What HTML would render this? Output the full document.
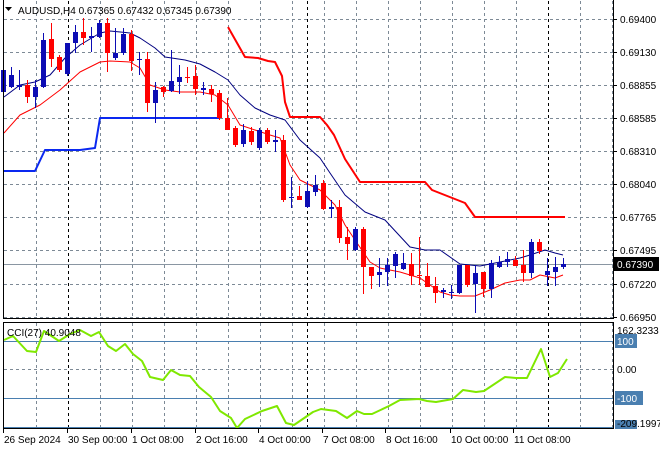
<!DOCTYPE html>
<html><head><meta charset="utf-8"><style>
html,body{margin:0;padding:0;background:#fff;}
svg{display:block;font-family:"Liberation Sans",sans-serif;}
</style></head><body>
<svg id="s" width="660" height="450" xmlns="http://www.w3.org/2000/svg">
<rect width="660" height="450" fill="#fff"/>
<g id="grid"></g>
<g id="lines"></g>
<g id="candles"></g>
<g id="over"></g>
<g id="axis" font-size="10" fill="#000"></g>
</svg>
<script>
const NS="http://www.w3.org/2000/svg";
function el(p,t,a,txt){const e=document.createElementNS(NS,t);for(const k in a)e.setAttribute(k,a[k]);if(txt!==undefined)e.textContent=txt;document.getElementById(p).appendChild(e);return e;}
const gray="#7d8a96";
[19,52,85,118,151,184,217,250,284,317].forEach(y=>el("grid","line",{x1:4,x2:613,y1:y+.5,y2:y+.5,stroke:gray,"stroke-dasharray":"3,3"}));
for(let x=36;x<613;x+=32){const blk=(x==68||x==548);el("grid","line",{x1:x+.5,x2:x+.5,y1:1,y2:318,stroke:blk?"#000":gray,"stroke-dasharray":"3,3"});el("grid","line",{x1:x+.5,x2:x+.5,y1:323,y2:428,stroke:blk?"#000":gray,"stroke-dasharray":"3,3"});}
el("grid","line",{x1:307.5,x2:307.5,y1:1,y2:318,stroke:"#000","stroke-dasharray":"3,3"});
el("grid","line",{x1:307.5,x2:307.5,y1:323,y2:428,stroke:"#000","stroke-dasharray":"3,3"});
el("grid","line",{x1:4,x2:613,y1:369.5,y2:369.5,stroke:gray,"stroke-dasharray":"3,3"});
[341,398,427].forEach(y=>el("grid","line",{x1:4,x2:613,y1:y+.5,y2:y+.5,stroke:"#4a7fb0"}));
el("grid","line",{x1:4,x2:613,y1:264.5,y2:264.5,stroke:"#8a96a2"});
function pl(pts,st,w){el("lines","polyline",{points:pts.map(p=>p.join(",")).join(" "),fill:"none",stroke:st,"stroke-width":w,"stroke-linejoin":"round"});}
pl([[4,97],[20,85],[35,82],[50,75],[65,58],[80,45],[100,33],[110,31],[130,33],[140,38],[155,48],[165,57],[185,60],[200,64],[215,72],[228,80],[240,95],[255,108],[270,115],[285,120],[300,140],[320,158],[330,173],[345,195],[365,212],[385,220],[410,247],[425,250],[440,250],[460,264],[480,266],[500,262],[520,258],[530,255],[545,250],[555,253],[563,255]],"#000080",1);
pl([[4,133],[20,115],[40,105],[60,90],[80,72],[100,62],[110,61],[130,62],[140,68],[150,85],[165,90],[180,92],[200,92],[215,95],[228,105],[240,125],[255,130],[270,135],[280,138],[290,165],[300,180],[320,190],[335,205],[345,225],[355,240],[370,262],[380,268],[400,272],[420,278],[440,292],[450,295],[460,296],[475,296],[490,290],[505,283],[520,280],[530,280],[540,275],[550,277],[555,278],[563,275]],"#ff0000",1);
pl([[4,171],[35,171],[45,150],[80,150],[95,148],[100,118],[220,118]],"#0a28f0",2);
pl([[228,27],[245,57],[258,58],[268,61],[275,62],[282,76],[285,102],[290,117],[320,117],[327,125],[334,135],[345,159],[360,182],[425,182],[432,190],[465,203],[475,217],[565,217]],"#ff0000",2);
const C=[[3,"b",70,92,63,113],[11,"b",75,87,67,88],[19,"b",85,87,70,90],[27,"r",85,97,80,103],[35,"b",87,97,80,108],[43,"b",40,87,33,88],[51,"r",39,59,23,67],[59,"r",57,70,55,72],[67,"b",43,74,43,76],[75,"b",32,43,25,53],[83,"r",32,38,18,45],[91,"b",36,38,27,52],[99,"b",23,37,20,38],[107,"r",23,53,18,72],[115,"b",53,58,28,60],[123,"b",34,53,28,55],[131,"r",34,61,30,71],[139,"b",59,60,52,75],[147,"r",59,103,52,112],[155,"b",90,103,82,123],[163,"r",87,92,86,97],[171,"b",81,91,50,92],[179,"b",77,82,65,94],[187,"r",77,78,67,83],[195,"r",76,89,65,95],[203,"b",88,90,82,95],[211,"r",89,94,85,102],[219,"r",93,118,90,120],[227,"r",118,130,98,130],[235,"r",128,145,126,147],[243,"b",130,144,124,147],[251,"r",131,142,127,145],[259,"b",130,148,128,150],[267,"r",130,142,128,144],[275,"b",140,142,130,152],[283,"r",140,200,135,202],[291,"b",197,198,177,208],[299,"r",196,200,186,200],[307,"b",191,207,181,208],[315,"b",185,192,175,196],[323,"r",183,209,180,210],[331,"b",207,209,200,218],[339,"r",207,238,200,243],[347,"r",237,244,227,260],[355,"b",229,250,227,251],[363,"r",229,267,227,294],[371,"r",267,276,267,289],[379,"b",272,275,258,287],[387,"b",265,272,258,286],[395,"b",254,266,252,278],[403,"b",263,269,253,270],[411,"r",264,276,253,285],[419,"r",275,276,237,285],[427,"r",276,287,263,287],[435,"r",286,293,277,303],[443,"b",290,292,288,298],[451,"b",292,293,285,299],[459,"b",265,293,265,294],[467,"r",265,285,265,287],[475,"b",273,284,265,313],[483,"r",272,289,272,297],[491,"b",263,289,260,298],[499,"b",262,267,256,268],[507,"b",259,262,252,267],[515,"r",260,266,256,265],[523,"r",265,273,250,282],[531,"b",242,273,239,278],[539,"r",242,251,239,254],[547,"b",271,275,258,286],[555,"b",267,272,257,286],[563,"b",264,267,258,269]];
C.forEach(c=>{const col=c[1]=="b"?"#0c0cb4":"#ff0000";el("candles","line",{x1:c[0]+.5,x2:c[0]+.5,y1:c[4],y2:c[5],stroke:col});let h=Math.max(1,c[3]-c[2]);el("candles","rect",{x:c[0]-2,y:c[2],width:5,height:h,fill:col});});
pl([[4,340],[13,336],[27,351],[36,352],[44,331],[59,341],[70,334],[80,330],[91,336],[99,332],[108,346],[116,351],[125,344],[133,354],[142,361],[150,377],[163,380],[171,370],[180,375],[190,376],[199,387],[211,397],[220,411],[231,418],[237,428],[245,419],[262,411],[277,406],[286,423],[294,425],[313,412],[321,409],[336,411],[347,418],[357,411],[364,414],[372,414],[389,406],[400,400],[419,399],[427,401],[436,402],[453,399],[463,390],[476,392],[484,391],[505,377],[516,378],[527,378],[541,349],[550,377],[558,373],[567,359]],"#7fe800",2);
el("over","rect",{x:3.5,y:-1,width:610,height:319.5,fill:"none",stroke:"#000"});
el("over","rect",{x:3.5,y:322.5,width:610,height:106,fill:"none",stroke:"#000"});
el("over","path",{d:"M5 7 L12 7 L8.5 11 Z",fill:"#000"});
el("axis","text",{x:18,y:14,"font-size":"10"},"AUDUSD,H4 0.67365 0.67432 0.67345 0.67390");
el("axis","text",{x:7,y:336,"font-size":"10"},"CCI(27) 40.9048");
[["0.69400",19],["0.69130",52],["0.68855",85],["0.68585",118],["0.68310",151],["0.68040",184],["0.67765",217],["0.67495",250],["0.67220",284],["0.66950",317]].forEach(p=>{el("axis","line",{x1:613,x2:617,y1:p[1]+.5,y2:p[1]+.5,stroke:"#000"});el("axis","text",{x:620,y:p[1]+4},p[0]);});
el("axis","rect",{x:614,y:257,width:45,height:14,fill:"#000"});
el("axis","text",{x:617,y:268,fill:"#fff"},"0.67390");
el("axis","text",{x:617,y:334},"162.3233");
[["100",341],["-100",398]].forEach(p=>{el("axis","rect",{x:615,y:p[1]-7,width:p[0].length*6+4,height:14,fill:"#4a7fb0"});el("axis","text",{x:617,y:p[1]+4,fill:"#fff"},p[0]);});
el("axis","text",{x:617,y:373},"0.00");
el("axis","rect",{x:615,y:420,width:22,height:9,fill:"#4a7fb0"});
el("axis","text",{x:617,y:427},"-209.1997");
[["26 Sep 2024",3],["30 Sep 00:00",67],["1 Oct 08:00",131],["2 Oct 16:00",195],["4 Oct 00:00",258],["7 Oct 08:00",322],["8 Oct 16:00",385],["10 Oct 00:00",450],["11 Oct 08:00",513]].forEach(p=>{el("axis","line",{x1:p[1]+.5,x2:p[1]+.5,y1:429,y2:433,stroke:"#000"});el("axis","text",{x:p[1]+1,y:443},p[0]);});
</script>
</body></html>
